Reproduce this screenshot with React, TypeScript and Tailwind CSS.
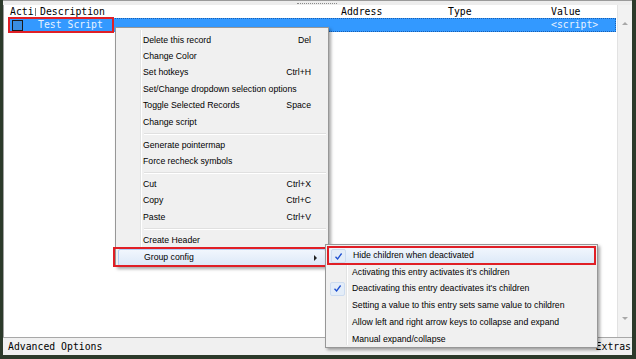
import React from "react";

const ui = { fontFamily: '"Liberation Sans", Arial, sans-serif' };
const mono = { fontFamily: '"DejaVu Sans Mono", monospace' };

type Item = { label: string; sc?: string } | "sep";

const mainItems: Item[] = [
  { label: "Delete this record", sc: "Del" },
  { label: "Change Color" },
  { label: "Set hotkeys", sc: "Ctrl+H" },
  { label: "Set/Change dropdown selection options" },
  { label: "Toggle Selected Records", sc: "Space" },
  { label: "Change script" },
  "sep",
  { label: "Generate pointermap" },
  { label: "Force recheck symbols" },
  "sep",
  { label: "Cut", sc: "Ctrl+X" },
  { label: "Copy", sc: "Ctrl+C" },
  { label: "Paste", sc: "Ctrl+V" },
  "sep",
  { label: "Create Header" },
];

const subItems: { label: string; checked?: boolean; hl?: boolean }[] = [
  { label: "Hide children when deactivated", checked: true, hl: true },
  { label: "Activating this entry activates it's children" },
  { label: "Deactivating this entry deactivates it's children", checked: true },
  { label: "Setting a value to this entry sets same value to children" },
  { label: "Allow left and right arrow keys to collapse and expand" },
  { label: "Manual expand/collapse" },
];

export default function App() {
  return (
    <div className="relative w-[636px] h-[359px] overflow-hidden bg-[#2c3a2a] pl-[3px] pr-[4px] pb-[4px] flex flex-col">
      {/* top splitter */}
      <div className="h-[5px] bg-[#ededed] border-t border-[#9a9a9a] flex justify-center items-center shrink-0">
        <div className="w-[40px] h-[1px] border-t border-dotted border-[#8a8a8a] ml-[-2px]" />
      </div>
      {/* list area */}
      <div className="flex-1 flex bg-white border-l border-[#a0a0a0] min-h-0">
        <div className="flex-1 flex flex-col pl-[5px]" style={mono}>
          <div className="h-[13px] flex items-center text-[9.8px] text-black leading-none pt-[1px]">
            <div className="w-[31px] flex items-center pl-[1px]">
              <span>Acti</span>
              <span className="ml-[1px] w-px h-[8px] bg-[#777]" />
            </div>
            <div className="w-[301px]">Description</div>
            <div className="w-[107px]">Address</div>
            <div className="w-[103px]">Type</div>
            <div>Value</div>
          </div>
          <div className="relative h-[14px] bg-[#3399ff] flex items-center text-[9.8px] text-[#e6f2ff] leading-none mr-[1px] border border-dotted border-[#1a5fb0]">
            <div className="w-[28px] flex items-center">
              <div className="ml-[2px] w-[11px] h-[11px] border border-[#1a1a1a] bg-[#3a8de0]" />
            </div>
            <div className="w-[303px]">Test Script</div>
            <div className="w-[107px]" />
            <div className="w-[103px]" />
            <div>&lt;script&gt;</div>
          </div>
        </div>
        {/* scrollbar */}
        <div className="w-[15px] bg-[#f2f2f2] border-l border-[#e2e2e2] flex flex-col justify-between items-center py-[17px]">
          <div className="w-0 h-0 border-l-[3px] border-r-[3px] border-b-[3px] border-l-transparent border-r-transparent border-b-[#a8a8a8]" />
          <div className="w-0 h-0 border-l-[3px] border-r-[3px] border-t-[3px] border-l-transparent border-r-transparent border-t-[#a8a8a8]" />
        </div>
      </div>
      {/* status bar */}
      <div className="h-[18px] shrink-0 bg-[#f0f0f0] border-t border-[#a8a8a8] flex items-center justify-between pl-[5px] pr-[1px] pt-[1px] text-[9.8px] text-black" style={mono}>
        <span>Advanced Options</span>
        <span>Extras</span>
      </div>

      {/* red box around row */}
      <div className="absolute left-[8px] top-[17px] w-[106px] h-[16px] border-2 border-[#e01f26]" />

      {/* main context menu */}
      <div
        className="absolute left-[115px] top-[27px] w-[214px] h-[240px] bg-[#f0f0f0] border border-[#979797] shadow-[2px_2px_3px_rgba(0,0,0,0.35)] pt-[4px] px-[2px]"
        style={ui}
      >
        <div className="absolute left-[24px] top-[2px] bottom-[2px] w-px bg-[#e2e3e3]" />
        <div className="absolute left-[25px] top-[2px] bottom-[2px] w-px bg-white" />
        {mainItems.map((it, i) =>
          it === "sep" ? (
            <div key={i} className="h-[6.6px] flex items-center pl-[26px]">
              <div className="w-full h-[2px] border-t border-[#e0e0e0] border-b border-b-white" />
            </div>
          ) : (
            <div key={i} className="relative h-[16.4px] flex items-center pl-[25px] pr-[15px] text-[8.7px] text-black">
              <span className="flex-1">{it.label}</span>
              {it.sc && <span>{it.sc}</span>}
            </div>
          )
        )}
        <div className="relative h-[17px] mt-[1px] flex items-center pl-[25px] pr-[8px] text-[8.7px] text-black rounded-[2px] border border-[#aecff7] bg-gradient-to-b from-[#f1f6fd] to-[#dde9f8]">
          <span className="flex-1">Group config</span>
          <div className="w-0 h-0 border-t-[3px] border-b-[3px] border-l-[3px] border-t-transparent border-b-transparent border-l-[#222]" />
        </div>
      </div>
      {/* red box around Group config */}
      <div className="absolute left-[113px] top-[247px] w-[215px] h-[20px] border-2 border-[#e01f26]" />

      {/* submenu */}
      <div
        className="absolute left-[325px] top-[244px] w-[273px] h-[104px] bg-[#f0f0f0] border border-[#979797] shadow-[2px_2px_3px_rgba(0,0,0,0.35)] pt-[2px] px-[2px]"
        style={ui}
      >
        <div className="absolute left-[20px] top-[2px] bottom-[2px] w-px bg-[#e2e3e3]" />
        <div className="absolute left-[21px] top-[2px] bottom-[2px] w-px bg-white" />
        {subItems.map((it, i) => (
          <div
            key={i}
            className={
              "relative h-[16.8px] flex items-center pl-[24px] text-[8.7px] text-black " +
              (it.hl ? "bg-gradient-to-b from-[#f1f6fd] to-[#dde9f8] border border-[#aecff7] rounded-[2px]" : "")
            }
          >
            {it.checked && (
              <div className="absolute left-[2px] top-[1px] w-[15px] h-[14px] bg-[#e4edf8] border border-[#cddcf0] rounded-[2px] flex items-center justify-center">
                <svg width="9" height="9" viewBox="0 0 9 9">
                  <path d="M1.5 4.8 L3.6 7 L7.6 1.5" fill="none" stroke="#1d4fd1" strokeWidth="1.3" />
                </svg>
              </div>
            )}
            <span>{it.label}</span>
          </div>
        ))}
      </div>
      {/* red box around Hide children */}
      <div className="absolute left-[327px] top-[246px] w-[269px] h-[19px] border-2 border-[#e01f26]" />
    </div>
  );
}
